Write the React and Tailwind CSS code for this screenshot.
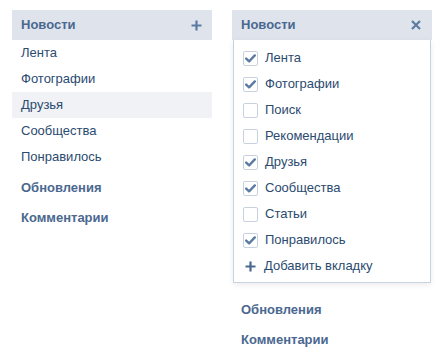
import React from "react";

const font = { fontFamily: '"Liberation Sans", Arial, sans-serif' };

function Check({ on }) {
  return (
    <span className="flex h-[15px] w-[15px] shrink-0 items-center justify-center rounded-[2px] border border-[#c7d2de] bg-white">
      {on && (
        <svg width="11" height="9" viewBox="0 0 11 9">
          <path d="M1.2 4.6 L4.1 7.3 L9.8 1.4" fill="none" stroke="#5b7ba3" strokeWidth="2.4" strokeLinecap="round" strokeLinejoin="round" />
        </svg>
      )}
    </span>
  );
}

function Plus({ c = "#5b7ba3" }) {
  return (
    <svg width="11" height="11" viewBox="0 0 11 11">
      <path d="M5.5 0.5 V10.5 M0.5 5.5 H10.5" stroke={c} strokeWidth="2.2" />
    </svg>
  );
}

function Cross() {
  return (
    <svg width="10" height="10" viewBox="0 0 10 10">
      <path d="M1 1 L9 9 M9 1 L1 9" stroke="#5b7ba3" strokeWidth="2.2" />
    </svg>
  );
}

export default function App() {
  const left = ["Лента", "Фотографии", "Друзья", "Сообщества", "Понравилось"];
  const right = [
    ["Лента", true],
    ["Фотографии", true],
    ["Поиск", false],
    ["Рекомендации", false],
    ["Друзья", true],
    ["Сообщества", true],
    ["Статьи", false],
    ["Понравилось", true],
  ];
  return (
    <div className="flex h-[358px] w-[442px] bg-white text-[13px]" style={font}>
      <div className="ml-[12px] mt-[10px] w-[200px]">
        <div className="flex h-[30px] items-center justify-between bg-[#dfe4ec] pl-[9px] pr-[10px]">
          <span className="font-bold text-[#4a6890]">Новости</span>
          <Plus />
        </div>
        {left.map((t) => (
          <div
            key={t}
            className={`flex h-[26px] items-center pl-[9px] text-[#2b4b70] ${t === "Друзья" ? "bg-[#f0f2f5]" : ""}`}
          >
            {t}
          </div>
        ))}
        <div className="mt-[3px] flex h-[30px] items-center pl-[9px] font-bold text-[#4a6890]">Обновления</div>
        <div className="flex h-[30px] items-center pl-[9px] font-bold text-[#4a6890]">Комментарии</div>
      </div>
      <div className="ml-[20px] mt-[10px] w-[200px]">
        <div className="flex h-[30px] items-center justify-between bg-[#dfe4ec] pl-[9px] pr-[11px]">
          <span className="font-bold text-[#4a6890]">Новости</span>
          <Cross />
        </div>
        <div className="mx-[1px] border border-t-0 border-[#c8d3df] bg-white pb-[3px] pt-[5px] shadow-[0_2px_6px_rgba(0,0,0,0.08)]">
          {right.map(([t, on]) => (
            <div key={t} className="flex h-[26px] items-center gap-[7px] pl-[9px] text-[#2b4b70]">
              <Check on={on} />
              <span>{t}</span>
            </div>
          ))}
          <div className="flex h-[26px] items-center gap-[8px] pl-[11px] text-[#2b4b70]">
            <Plus c="#4a6890" />
            <span>Добавить вкладку</span>
          </div>
        </div>
        <div className="mt-[12px] flex h-[30px] items-center pl-[9px] font-bold text-[#4a6890]">Обновления</div>
        <div className="flex h-[29px] items-center pl-[9px] font-bold text-[#4a6890]">Комментарии</div>
      </div>
    </div>
  );
}
